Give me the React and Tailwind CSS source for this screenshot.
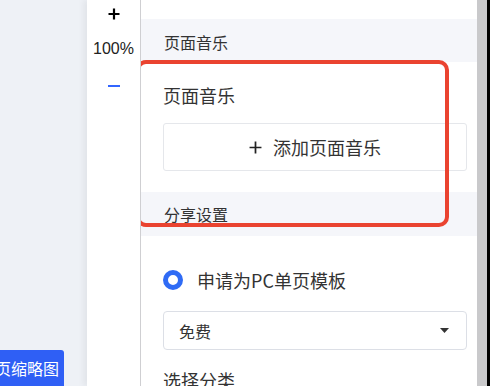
import React from 'react';

const cjk = { fontFamily: '"Noto Sans CJK SC", "Noto Sans", sans-serif' };

function PlusIcon({ size = 12, stroke = 2.2, className = '' }) {
  return (
    <svg width={size} height={size} viewBox="0 0 12 12" className={className}>
      <path d="M6 0.5V11.5M0.5 6H11.5" stroke="currentColor" strokeWidth={stroke} fill="none" />
    </svg>
  );
}

export default function App() {
  return (
    <div className="flex w-[490px] h-[386px] overflow-hidden bg-white text-[#333]" style={cjk}>
      {/* canvas area */}
      <div className="w-[87px] shrink-0 bg-[#eef1f6] flex flex-col justify-end">
        <div className="h-[36px] w-[64px] bg-[#2f5ff5] rounded-tr-[3px] flex items-center justify-end pr-[5px] overflow-hidden">
          <span className="text-white text-[16px] whitespace-nowrap leading-none">页缩略图</span>
        </div>
      </div>

      {/* zoom column */}
      <div className="w-[54px] shrink-0 bg-white border-r border-[#cfcfd2] shadow-[-4px_0_6px_rgba(0,0,0,0.05)] flex flex-col items-center">
        <PlusIcon className="mt-[8px] text-black" />
        <span className="mt-[21px] text-[16px] leading-none text-[#222]" style={{ fontFamily: '"Liberation Sans", sans-serif' }}>100%</span>
        <span className="mt-[28px] w-[12px] h-[2px] bg-[#3366ff]" />
      </div>

      {/* settings panel */}
      <div className="relative flex-1 overflow-hidden">
        <div className="h-[19px] bg-white" />
        <div className="h-[43px] bg-[#f5f6fa] pl-[23px] flex items-center text-[16px] pt-[2px]">页面音乐</div>
        <div className="h-[130px] bg-white pl-[22px] pr-[10px] pt-[20px]">
          <div className="text-[18px] leading-[27px]">页面音乐</div>
          <div className="mt-[14px] h-[48px] border border-[#e5e7eb] rounded-[3px] flex items-center justify-center gap-[11px] text-[18px]">
            <PlusIcon size={13} stroke={1.6} className="text-[#222]" />
            <span>添加页面音乐</span>
          </div>
        </div>
        <div className="h-[44px] bg-[#f5f6fa] pl-[23px] flex items-center text-[16px]">分享设置</div>
        <div className="bg-white pl-[22px] pr-[10px] pt-[33px]">
          <div className="flex items-center gap-[14px] h-[22px]">
            <span className="w-[20px] h-[20px] rounded-full border-[5px] border-[#2f6bf5] bg-white shrink-0" />
            <span className="text-[18px]">申请为PC单页模板</span>
          </div>
          <div className="mt-[20px] h-[39px] border border-[#dcdfe6] rounded-[4px] flex items-center justify-between pl-[15px] pr-[17px]">
            <span className="text-[16px]">免费</span>
            <svg width="9" height="5" viewBox="0 0 9 5">
              <path d="M0 0H9L4.5 5Z" fill="#333" />
            </svg>
          </div>
          <div className="mt-[17px] text-[18px] leading-[27px]">选择分类</div>
        </div>

        {/* highlight overlay */}
        <div className="absolute left-[-5px] top-[60px] w-[313px] h-[167px] border-[4px] border-[#ea4330] rounded-[10px] pointer-events-none" />
      </div>

      {/* scrollbar */}
      <div className="w-[10px] shrink-0 bg-[#c9c9cb]" />
      <div className="w-[3px] shrink-0 bg-black" />
    </div>
  );
}
